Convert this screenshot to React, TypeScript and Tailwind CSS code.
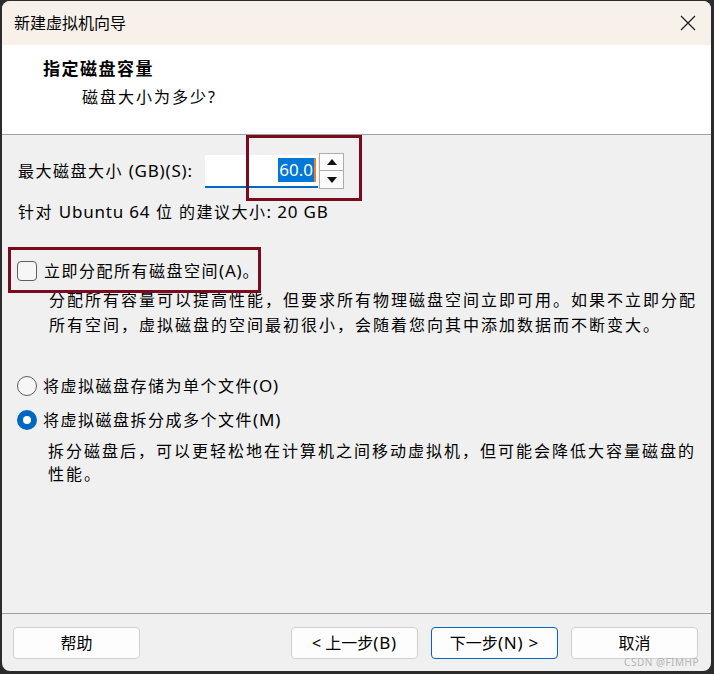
import React from 'react';

const font = "font-['Noto_Sans','Noto_Sans_CJK_SC',sans-serif]";
const latin = 'text-[17px] tracking-[0.8px]';

const Radio = ({ checked }: { checked?: boolean }) =>
  checked ? (
    <span className="w-[20px] h-[20px] rounded-full bg-[#0067c0] flex items-center justify-center shrink-0">
      <span className="w-[8px] h-[8px] rounded-full bg-white" />
    </span>
  ) : (
    <span className="w-[20px] h-[20px] rounded-full border border-[#5d5d5d] bg-[#f6f6f6] shrink-0" />
  );

const Button = ({ children, primary }: { children: React.ReactNode; primary?: boolean }) => (
  <button
    className={
      'w-[127px] h-[32px] rounded-[4px] bg-[#fdfdfd] text-[16px] text-black flex items-center justify-center ' +
      (primary ? 'border border-[#0067c0]' : 'border border-[#d0d0d0]')
    }
  >
    {children}
  </button>
);

export default function App() {
  return (
    <div className={`w-[714px] h-[674px] bg-[#2b2b2b] pt-px pl-[2px] ${font} text-black`}>
      <div className="w-[709px] h-[670px] rounded-[8px] overflow-hidden bg-[#f0f0f0] flex flex-col relative">
        {/* title bar */}
        <div className="h-[44px] bg-[#f8f1ea] flex items-center justify-between pl-[12px] pr-[15px] shrink-0">
          <span className="text-[16px]">新建虚拟机向导</span>
          <svg width="16" height="16" viewBox="0 0 16 16" stroke="#1a1a1a" strokeWidth="1.2" fill="none">
            <path d="M1 1l14 14M15 1L1 15" />
          </svg>
        </div>

        {/* header */}
        <div className="h-[90px] bg-white border-b border-[#a0a0a0] pl-[41px] pt-[12px] shrink-0">
          <div className="text-[17px] leading-[24px] font-bold tracking-[1.5px]">指定磁盘容量</div>
          <div className="text-[16px] leading-[24px] tracking-[2px] mt-[4px] ml-[39px]">磁盘大小为多少?</div>
        </div>

        {/* body */}
        <div className="flex-1 relative text-[16px]">
          <div className="flex items-center mt-[18px] pl-[16px] h-[36px]">
            <span className="w-[187px] tracking-[1.5px] whitespace-nowrap">
              最大磁盘大小 <span className={latin}>(GB)(S):</span>
            </span>
            <div className="w-[113px] h-[33px] bg-white border-b-2 border-[#0067c0] flex items-center justify-end pr-[2px]">
              <span className="bg-[#0078d7] text-white text-[17px] leading-[24px] px-px">60.0</span>
              <span className="w-[2px] h-[24px] bg-[#f08020]" />
            </div>
            <div className="flex flex-col w-[25px] h-[36px] ml-px">
              <div className="h-[18px] border border-[#adadad] bg-[#fbfbfb] flex items-center justify-center">
                <svg width="10" height="6" viewBox="0 0 10 6"><path d="M0 6L5 0l5 6z" fill="#111" /></svg>
              </div>
              <div className="h-[18px] border border-t-0 border-[#adadad] bg-[#fbfbfb] flex items-center justify-center">
                <svg width="10" height="6" viewBox="0 0 10 6"><path d="M0 0h10L5 6z" fill="#111" /></svg>
              </div>
            </div>
          </div>

          <div className="mt-[11px] pl-[16px] leading-[24px] tracking-[1.5px]">
            针对 <span className={latin}>Ubuntu 64</span> 位 的建议大小<span className={latin}>: 20 GB</span>
          </div>

          <div className="mt-[35px] pl-[15px] flex items-center h-[24px]">
            <span className="w-[20px] h-[20px] rounded-[4px] border border-[#5d5d5d] bg-[#f6f6f6] shrink-0" />
            <span className="ml-[7px] tracking-[1.5px]">
              立即分配所有磁盘空间<span className={latin}>(A)</span>。
            </span>
          </div>

          <p className="mt-[5px] ml-[47px] leading-[25px] tracking-[2px] whitespace-nowrap">
            分配所有容量可以提高性能，但要求所有物理磁盘空间立即可用。如果不立即分配
            <br />
            所有空间，虚拟磁盘的空间最初很小，会随着您向其中添加数据而不断变大。
          </p>

          <div className="mt-[36px] pl-[15px] flex items-center h-[24px]">
            <Radio />
            <span className="ml-[6px] tracking-[1.5px]">
              将虚拟磁盘存储为单个文件<span className={latin}>(O)</span>
            </span>
          </div>
          <div className="mt-[10px] pl-[15px] flex items-center h-[24px]">
            <Radio checked />
            <span className="ml-[6px] tracking-[1.5px]">
              将虚拟磁盘拆分成多个文件<span className={latin}>(M)</span>
            </span>
          </div>

          <p className="mt-[8px] ml-[46px] leading-[23px] tracking-[2px] whitespace-nowrap">
            拆分磁盘后，可以更轻松地在计算机之间移动虚拟机，但可能会降低大容量磁盘的
            <br />
            性能。
          </p>

          {/* annotation boxes */}
          <div className="absolute left-[244px] top-0 w-[116px] h-[66px] border-[3px] border-[#7a0a1e]" />
          <div className="absolute left-[6px] top-[112px] w-[253px] h-[46px] border-[3px] border-[#7a0a1e]" />
        </div>

        {/* footer */}
        <div className="h-[58px] border-t border-[#a0a0a0] pt-[13px] pl-[11px] pr-[13px] flex shrink-0">
          <Button>帮助</Button>
          <div className="flex-1" />
          <div className="flex gap-[13px]">
            <Button>
              &lt; 上一步<span className={latin}>(B)</span>
            </Button>
            <Button primary>
              下一步<span className={latin}>(N) &gt;</span>
            </Button>
            <Button>取消</Button>
          </div>
        </div>

        <span className="absolute right-[12px] bottom-[3px] text-[10px] leading-[12px] text-[#b4b4b4] tracking-[0.5px]">
          CSDN @FIMHP
        </span>
      </div>
    </div>
  );
}
